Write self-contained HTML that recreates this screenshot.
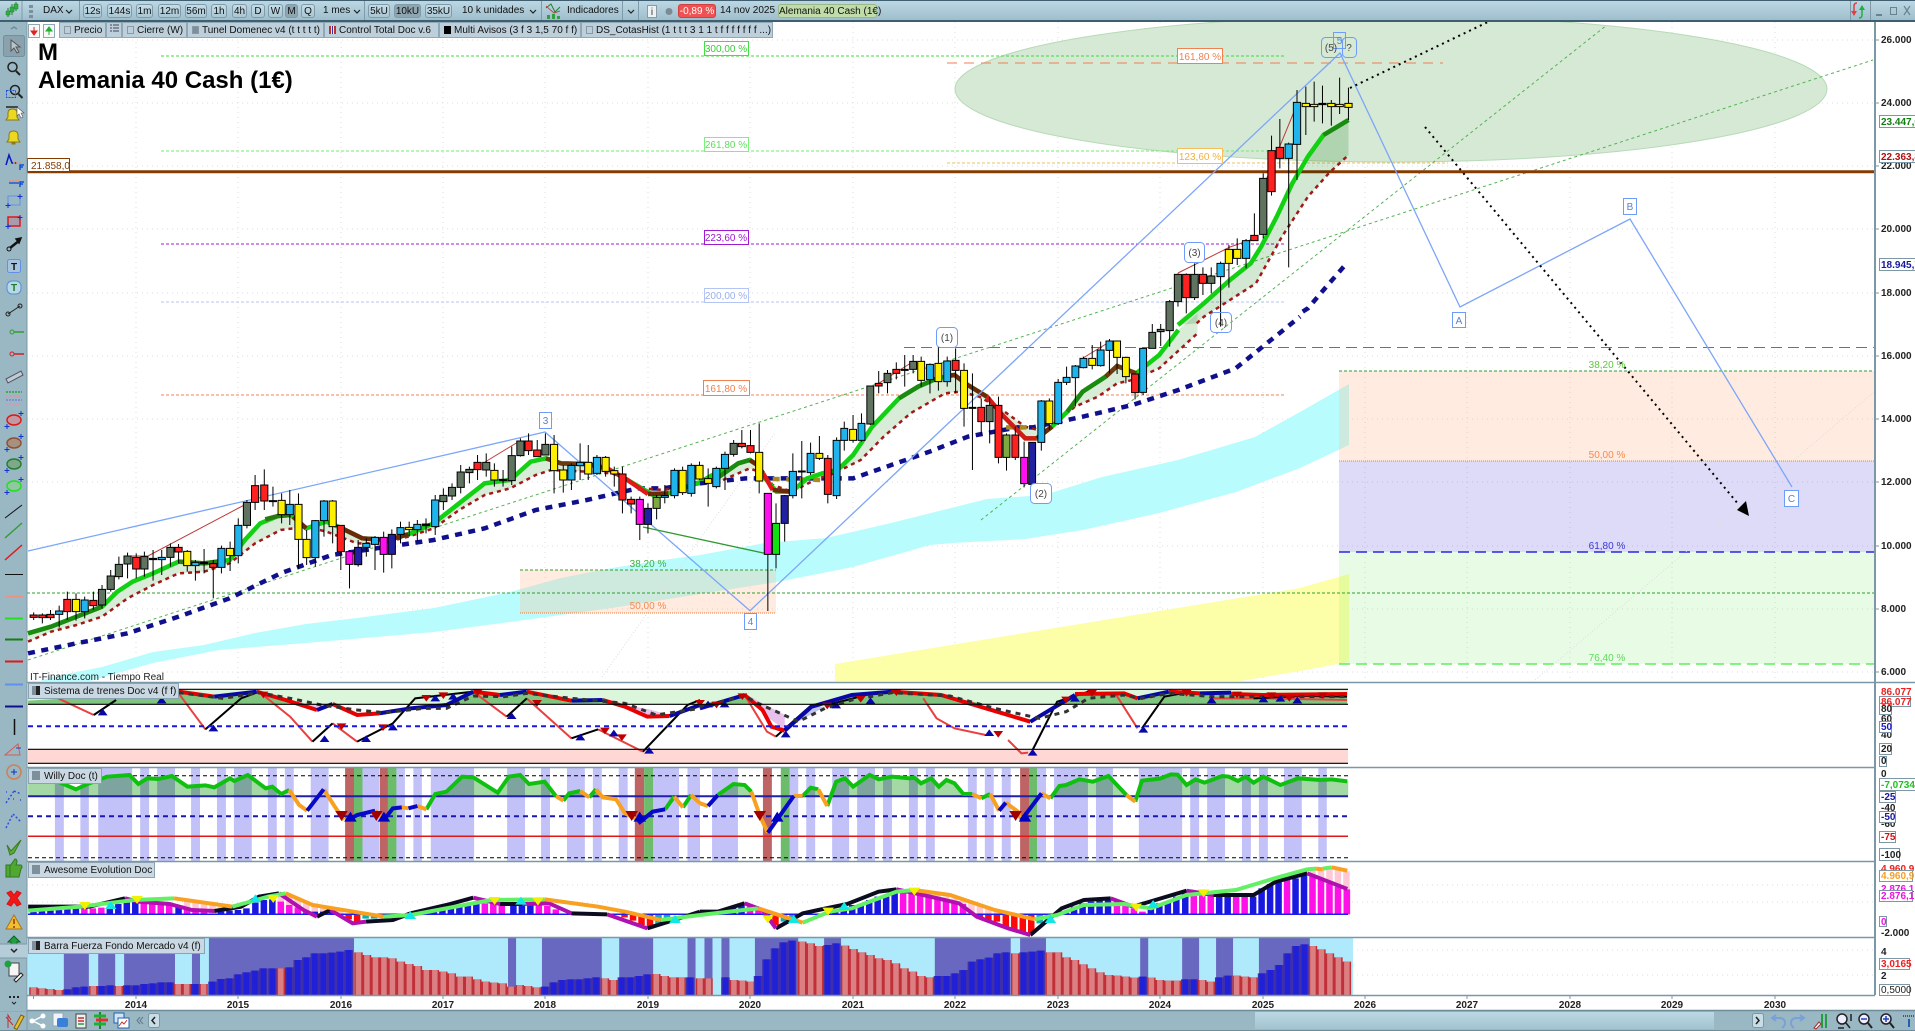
<!DOCTYPE html>
<html><head><meta charset="utf-8"><title>Alemania 40 Cash</title>
<style>
html,body{margin:0;padding:0;background:#fff}
body{width:1915px;height:1031px;position:relative;overflow:hidden;font-family:"Liberation Sans",sans-serif;color:#111}
svg{position:absolute;left:0;top:0}
path,polyline,polygon,line,rect,ellipse{vector-effect:non-scaling-stroke}
.tb{position:absolute;left:0;top:0;width:1915px;height:22px;box-sizing:border-box;background:linear-gradient(#bcd7e4,#9fbecc);border-top:1px solid #3f5f70;border-bottom:2px solid #3f5f70}
.b{position:absolute;top:4px;height:14px;line-height:13px;box-sizing:border-box;border:1px solid #7f9ba9;border-radius:3px;font-size:10px;text-align:center;white-space:nowrap;background:linear-gradient(#c4dde8,#a9c6d3)}
.b.a{background:#8fa5b0}
.t{position:absolute;top:4px;height:14px;line-height:14px;font-size:10px;white-space:nowrap}
.tab{position:absolute;top:22px;height:16px;line-height:15px;box-sizing:border-box;background:#bccfda;border:1px solid #8fa8b5;font-size:10px;white-space:nowrap;padding-left:2px;overflow:hidden}
.sq{display:inline-block;width:7px;height:8px;margin:0 3px 0 2px;vertical-align:-1px;border:1px solid #8a9aa4;box-sizing:border-box}
.pt{position:absolute;left:28px;height:16px;line-height:15px;box-sizing:border-box;background:#c9d8e2;border:1px solid #8aa3b0;font-size:10px;white-space:nowrap;padding-left:3px}
.sq2{display:inline-block;width:8px;height:9px;margin-right:4px;vertical-align:-1px;background:linear-gradient(90deg,#7d8f9a 50%,#222 50%)}
.ax{font-size:10px;font-weight:bold;fill:#222;font-family:"Liberation Sans",sans-serif}
.lb{font-size:10px;font-family:"Liberation Sans",sans-serif}
.yr{font-size:10px;font-weight:bold;fill:#222;text-anchor:middle;font-family:"Liberation Sans",sans-serif}
.w{font-size:10px;text-anchor:middle;font-family:"Liberation Sans",sans-serif;fill:#5a80c8}
</style></head><body>

<svg width="1915" height="1031" viewBox="0 0 1915 1031">
<defs>
<clipPath id="mc"><rect x="27" y="22" width="1848" height="660"/></clipPath>
<clipPath id="p1"><rect x="27" y="684" width="1320" height="83"/></clipPath>
<clipPath id="band5"><rect x="0" y="28" width="1568" height="45"/></clipPath>
</defs>

<!-- MAIN CHART -->
<g clip-path="url(#mc)">
<path d="M136 22V682M238 22V682M341 22V682M443 22V682M545 22V682M648 22V682M750 22V682M853 22V682M955 22V682M1058 22V682M1160 22V682M1263 22V682M1365 22V682M1467 22V682M1570 22V682M1672 22V682M1775 22V682M27 40H1875M27 103H1875M27 166H1875M27 229H1875M27 293H1875M27 356H1875M27 419H1875M27 482H1875M27 546H1875M27 609H1875M27 672H1875" stroke="#dcdcdc" stroke-width="1" stroke-dasharray="1 4" fill="none"/>
<ellipse cx="1391" cy="89" rx="436" ry="73" fill="#d5e9d5" stroke="#b8d9b8"/>
<polygon fill="#b9fcfd" points="51,677 102,667 153,652 204,645 255,633 306,624 357,618 434,608 510,592 561,578 612,568 663,560 700,555 765,543 826,538 891,523 987,499 1044,495 1102,477 1178,460 1255,437 1300,412 1349,384 1349,445 1300,468 1236,492 1159,513 1083,530 1025,539 953,543 930,545 853,567 777,582 700,594 612,608 561,615 510,622 434,632 306,643 219,650 153,663 90,681 40,681"/>
<polygon fill="#fdfea8" points="835,664 1300,588 1349,574 1349,662 1300,671 1240,681 835,681"/>
<rect x="520" y="570" width="256" height="43" fill="rgba(255,190,150,.3)"/>
<rect x="1339" y="371" width="536" height="90" fill="rgba(255,190,150,.3)"/>
<rect x="1339" y="461" width="536" height="91" fill="rgba(100,90,225,.22)"/>
<rect x="1339" y="552" width="536" height="112" fill="rgba(120,240,100,.17)"/>
<!-- fib lines -->
<g fill="none" stroke-width="1">
<path d="M161 56H1286" stroke="#3cdc3c" stroke-dasharray="3 2"/>
<path d="M161 151H1286" stroke="#70ee70" stroke-dasharray="3 2"/>
<path d="M161 244H1286" stroke="#a018d0" stroke-dasharray="3 2"/>
<path d="M161 302H1286" stroke="#b4c4f4" stroke-dasharray="3 2"/>
<path d="M161 395H1286" stroke="#f08050" stroke-dasharray="3 2"/>
<path d="M947 63H1443" stroke="#f08050" stroke-dasharray="10 7"/>
<path d="M947 163H1448" stroke="#f6bf5c" stroke-dasharray="3 2"/>
<path d="M27 593H1875" stroke="#2ea02e" stroke-dasharray="3 2"/>
<path d="M904 347.5H1875" stroke="#2ea02e" stroke-dasharray="11 6"/>
<path d="M1339 371H1875M520 570H776" stroke="#2ea02e" stroke-dasharray="3 2"/>
<path d="M1339 461H1875M520 613H776" stroke="#f07838" stroke-dasharray="1 1"/>
<path d="M1339 552H1875" stroke="#2828e0" stroke-width="1.5" stroke-dasharray="11 6"/>
<path d="M1339 664H1875" stroke="#5cf05c" stroke-width="1.5" stroke-dasharray="11 6"/>
<path d="M28 660L1873 60M981 520L1607 25" stroke="#54b254" stroke-dasharray="3 3"/>
<path d="M1535 680L1874 392M602 677L775 433" stroke="#ddd" stroke-dasharray="1 2"/>
</g>
<path d="M27 171.7H1875" stroke="#843c00" stroke-width="3" fill="none"/>

<!-- Z3 MAs -->
<g transform="translate(0 400) scale(.5102 .33333)" fill="none">
<polygon stroke="none" fill="#d8ecd8" points="55,700 100,680 150,650 200,620 230,575 260,545 300,520 350,485 400,490 450,480 480,420 510,370 545,348 570,345 600,385 640,365 670,385 710,415 760,420 800,403 850,370 900,310 950,250 1000,240 1040,185 1070,175 1100,190 1150,192 1190,205 1230,240 1280,285 1310,280 1370,248 1420,205 1420,240 1370,245 1300,270 1260,265 1200,220 1150,215 1080,210 1050,225 1000,265 950,285 900,330 850,385 800,410 750,430 700,430 640,395 600,380 550,390 500,430 450,490 400,515 350,520 300,555 250,595 200,650 150,675 100,695 55,725"/>
<polyline stroke="#10108c" stroke-width="4.5" stroke-dasharray="7 6.5" points="55,760 150,730 250,700 350,650 450,595 550,520 650,465 760,440 850,420 950,385 1050,330 1150,300 1250,265 1300,265 1372,248"/>
<polyline stroke="#a01818" stroke-width="2.5" stroke-dasharray="4 4" points="55,725 100,695 150,675 200,650 250,595 300,555 350,520 400,515 450,490 500,430 550,390 600,380 640,395 700,430 750,430 800,410 850,385 900,330 950,285 1000,265 1050,225 1080,210 1150,215 1200,220 1260,265 1300,270 1400,245"/>
<polyline stroke="#12d012" stroke-width="4.5" points="55,700 100,680 150,650 200,620 230,575 260,545 300,520 350,485 400,490 450,480 480,420 510,370 545,348 570,345 600,385 640,365 670,385 710,415 760,420 800,403 850,370 900,310 950,250 1000,240 1040,185 1070,175 1100,190 1150,192 1190,205 1230,240 1280,285 1310,280 1370,248 1420,205"/>
<polyline stroke="#1a8a10" stroke-width="4.5" points="55,700 100,680 150,650 200,620"/>
<polyline stroke="#2a7a10" stroke-width="4.5" points="350,485 400,490 440,482"/>
<polyline stroke="#2a7a10" stroke-width="4.5" points="520,358 545,348 570,345"/>
<polyline stroke="#6b2a08" stroke-width="4.5" points="575,350 600,385"/>
<polyline stroke="#6b2a08" stroke-width="4.5" points="670,385 710,415 760,420 800,403"/>
<polyline stroke="#6b3a10" stroke-width="4.5" points="1070,175 1100,190 1150,192 1190,205"/>
<polyline stroke="#e01818" stroke-width="4.5" points="1190,205 1230,240 1270,282"/>
<polyline stroke="#6b2a08" stroke-width="4.5" points="1270,282 1310,280"/>
</g>
<!-- Z8 MAs -->
<g transform="translate(700 300) scale(.38265 .33333)" fill="none">
<polygon stroke="none" fill="#d8ecd8" points="50,530 100,490 130,480 150,495 170,535 200,575 240,575 280,535 320,520 360,510 400,465 450,380 520,295 570,260 620,235 665,225 700,255 750,290 790,345 850,415 880,415 920,380 960,335 1000,275 1060,230 1090,198 1140,220 1200,165 1250,90 1300,40 1300,100 1200,205 1130,240 1090,250 1040,290 980,320 900,395 850,380 790,330 730,290 680,275 640,280 550,340 480,410 420,480 350,520 300,540 240,575 190,555 165,520 130,505 60,540"/>
<polyline stroke="#10108c" stroke-width="4.5" stroke-dasharray="7 6.5" points="0,550 120,535 400,535 600,455 700,410 830,382 870,382 1000,350 1130,315 1250,270 1400,205 1568,50"/>
<polyline stroke="#a01818" stroke-width="2.5" stroke-dasharray="4 4" points="60,540 130,505 165,520 190,555 240,575 300,540 350,520 420,480 480,410 550,340 640,280 680,275 730,290 790,330 850,380 900,395 980,320 1040,290 1090,250 1130,240 1200,205 1300,100"/>
<polyline stroke="#a88a20" stroke-width="4.5" stroke-dasharray="7 6.5" points="190,537 320,540"/>
<polyline stroke="#a88a20" stroke-width="4.5" stroke-dasharray="7 6.5" points="800,382 870,382"/>
<polyline stroke="#12d012" stroke-width="4.5" points="50,530 100,490 130,480 150,495 170,535 200,575 240,575 280,535 320,520 360,510 400,465 450,380 520,295 570,260 620,235 665,225 700,255 750,290 790,345 850,415 880,415 920,380 960,335 1000,275 1060,230 1090,198 1140,220 1200,165 1250,90"/>
<polyline stroke="#1a8a10" stroke-width="4.5" points="50,530 100,490 130,480"/>
<polyline stroke="#1a8a10" stroke-width="4.5" points="520,295 570,260 620,235"/>
<polyline stroke="#6b2a08" stroke-width="4.5" points="130,480 150,495 165,520"/>
<polyline stroke="#e01818" stroke-width="4.5" points="165,520 190,570"/>
<polyline stroke="#6b2a08" stroke-width="4.5" points="190,570 240,575"/>
<polyline stroke="#6b2a08" stroke-width="4.5" points="640,228 665,225 700,255 750,290"/>
<polyline stroke="#d81818" stroke-width="4.5" points="750,290 790,345 850,415 880,415"/>
<polyline stroke="#6b2a08" stroke-width="4.5" points="880,415 920,380"/>
<polyline stroke="#1a8a10" stroke-width="4.5" points="960,335 1000,275 1060,230"/>
<polyline stroke="#6b3a10" stroke-width="4.5" points="1060,230 1090,198 1140,220"/>
</g>
<!-- Z4 MAs -->
<g transform="translate(1100 20) scale(.5198 .33333)" fill="none">
<polygon stroke="none" fill="#d2e8d2" style="mix-blend-mode:multiply" points="150,915 200,850 250,780 290,730 310,680 340,590 370,490 400,410 430,345 478,300 478,405 440,460 400,530 350,650 300,790 260,830 200,890 186,910"/>
<polyline stroke="#10108c" stroke-width="4.5" stroke-dasharray="7 6.5" points="390,875 400,865 430,810 470,738"/>
<polyline stroke="#a01818" stroke-width="2.5" stroke-dasharray="4 4" points="186,910 200,890 260,830 300,790 350,650 400,530 440,460 478,405"/>
<polyline stroke="#12d012" stroke-width="4.5" points="150,915 200,850 250,780 290,730 310,680 340,590 370,490 400,410 430,345 478,300"/>
<polyline stroke="#1a8a10" stroke-width="4.5" points="430,345 478,300"/>
</g>

<!-- trend / waves -->
<g fill="none" stroke-width="1">
<polyline stroke="#7ca6f8" stroke-width="1.3" points="28,551 545,432 750,610.7 1340,53 1460,307 1630,219 1792,487"/>
<path d="M643 527L768 554" stroke="#2f9a2f" stroke-width="1.3"/>
<g stroke="#c03a3a">
<path d="M127 556H148L250 502M485 462L518 442M876 385L914 361M1083 358L1111 341M1178 273L1230 247L1256 238M1266 180L1298 102"/>
</g>
</g>

<!-- CANDLES Z3 -->
<g transform="translate(0 400) scale(.5102 .33333)">
<path stroke="#000" stroke-width="1" fill="none" d="M66 637V660M83 640V670M99 630V660M116 617V683M132 575V660M149 580V662M166 590V655M183 575V630M200 555V625M217 510V575M233 470V538M250 458V535M267 460V535M283 455V530M300 450V542M317 450V525M334 430V500M350 432V490M367 450V515M383 480V542M400 447V520M418 480V595M434 437V520M451 425V513M467 355V490M484 300V385M500 225V330M518 208V330M535 260V320M552 280V370M568 270V375M585 280V505M601 390V495M618 360V500M635 300V410M652 300V430M668 375V510M685 450V565M702 420V500M718 415V470M735 408V510M752 395V518M768 388V505M785 365V430M802 365V410M818 360V425M835 355V400M853 285V405M869 265V330M886 250V300M903 195V280M920 200V250M936 165V240M953 160V230M969 190V260M986 210V260M1003 140V255M1020 115V170M1036 100V165M1053 120V170M1069 100V165M1086 105V280M1104 195V278M1120 190V270M1137 130V240M1153 135V240M1170 165V225M1187 168V230M1204 200V260M1220 200V340M1237 290V340M1254 290V420M1270 310V400M1287 285V358M1303 255V310M1322 205V295M1338 200V285M1355 190V290M1371 185V240M1388 205V320M1404 200V265M1421 155V270M1438 120V170M1454 90V145M1471 90V160M1488 70V280M1505 280V633M1521 310V505M1538 285V425M1554 160V295"/>
<g stroke="#000" stroke-width="1">
<path fill="#5f7360" d="M193 568h14V615h-14zM210 528h14V568h-14zM226 493h14V530h-14zM243 468h14V492h-14zM276 470h14V507h-14zM327 442h14V472h-14zM477 307h14V376h-14zM896 216h14V262h-14zM913 208h14V218h-14zM879 262h14V288h-14zM862 286h14V305h-14zM996 167h14V242h-14zM1013 123h14V167h-14zM1062 133h14V165h-14zM1431 130h14V163h-14zM946 187h14V210h-14z"/>
<path fill="#ff2020" d="M59 645h14V652h-14zM76 645h14V653h-14zM92 643h14V653h-14zM125 598h14V635h-14zM176 601h14V617h-14zM260 472h14V507h-14zM343 442h14V456h-14zM411 491h14V502h-14zM493 257h14V307h-14zM511 255h14V303h-14zM661 376h14V455h-14zM929 187h14V209h-14zM1029 123h14V152h-14zM1046 150h14V170h-14zM1213 222h14V300h-14zM1230 298h14V312h-14zM1447 130h14V140h-14zM1464 137h14V157h-14z"/>
<path fill="#fff000" d="M142 598h14V635h-14zM360 454h14V497h-14zM444 445h14V467h-14zM545 301h14V344h-14zM578 313h14V418h-14zM594 418h14V473h-14zM645 303h14V380h-14zM795 382h14V389h-14zM962 211h14V240h-14zM1079 133h14V212h-14zM1097 210h14V240h-14zM1146 187h14V222h-14zM1180 172h14V214h-14zM1197 212h14V222h-14zM1331 211h14V278h-14zM1364 196h14V237h-14zM1381 236h14V250h-14zM1481 157h14V243h-14z"/>
<path fill="#1fb4ec" d="M109 633h14V643h-14zM159 600h14V635h-14zM310 472h14V479h-14zM376 487h14V497h-14zM427 445h14V502h-14zM460 376h14V467h-14zM561 313h14V344h-14zM611 362h14V473h-14zM628 303h14V362h-14zM711 430h14V442h-14zM728 412h14V433h-14zM778 383h14V403h-14zM811 373h14V389h-14zM846 300h14V380h-14zM1113 196h14V240h-14zM1130 187h14V197h-14zM1163 172h14V220h-14zM1296 287h14V292h-14zM1315 211h14V287h-14zM1348 196h14V280h-14zM1397 205h14V260h-14zM1414 163h14V205h-14zM1547 214h14V287h-14z"/>
<path fill="#ff10f0" d="M678 455h14V493h-14zM745 412h14V463h-14zM1247 298h14V373h-14zM1498 280h14V463h-14z"/>
<path fill="#2020a0" d="M695 442h14V494h-14zM761 403h14V463h-14zM1263 325h14V373h-14zM1531 287h14V370h-14z"/>
<path fill="#10e010" d="M1514 370h14V463h-14z"/>
<path fill="#80a840" d="M1280 292h14V325h-14z"/>
<path fill="#000" d="M293 475h14V479h-14zM393 487h14V491h-14zM528 302h14V305h-14zM828 372h14V377h-14zM979 238h14V242h-14z"/>
</g>
</g>
<!-- CANDLES Z8 -->
<g transform="translate(700 300) scale(.38265 .33333)">
<path stroke="#000" stroke-width="1" fill="none" d="M266 423V595M289 428V525M312 408V480M334 465V610M357 412V597M377 365V452M400 345V428M422 340V425M445 258V375M467 213V280M490 210V280M513 187V238M535 165V260M557 165V220M578 170V260M601 190V280M623 140V272M646 170V260M668 145V280M690 190V380M712 220V510M735 295V405M757 290V430M780 290V490M801 400V512M824 380V480M847 425V562M868 427V568M892 300V452M913 295V390M936 237V375M958 200V255M981 195V320M1002 170V205M1025 135V208M1047 125V200M1070 117V220M1090 123V222M1113 170V250M1137 222V298M1158 145V285M1182 72V145M1204 72V138"/>
<g stroke="#000" stroke-width="1">
<path fill="#5f7360" d="M436 258h18V372h-18zM481 220h18V248h-18zM548 184h18V208h-18zM748 316h18V365h-18zM1173 97h18V145h-18zM1195 88h18V95h-18z"/>
<path fill="#ff2020" d="M325 475h18V583h-18zM458 250h18V258h-18zM504 208h18V220h-18zM659 181h18V211h-18zM726 322h18V365h-18zM771 316h18V472h-18zM815 405h18V472h-18zM1128 222h18V278h-18z"/>
<path fill="#fff000" d="M303 460h18V475h-18zM391 388h18V421h-18zM569 184h18V241h-18zM614 190h18V245h-18zM681 211h18V325h-18zM904 303h18V371h-18zM1016 175h18V196h-18zM1081 123h18V172h-18zM1104 172h18V230h-18z"/>
<path fill="#1fb4ec" d="M280 460h18V518h-18zM348 421h18V587h-18zM368 385h18V421h-18zM413 370h18V421h-18zM592 193h18V239h-18zM637 183h18V245h-18zM883 303h18V427h-18zM927 247h18V371h-18zM949 232h18V247h-18zM972 198h18V233h-18zM993 175h18V203h-18zM1038 150h18V197h-18zM1061 123h18V151h-18zM1149 145h18V277h-18z"/>
<path fill="#ff10f0" d="M838 472h18V551h-18z"/>
<path fill="#2020a0" d="M859 427h18V553h-18z"/>
<path fill="#80a840" d="M792 405h18V472h-18z"/>
<path fill="#000" d="M257 513h18V516h-18zM526 208h18V211h-18zM703 322h18V325h-18z"/>
</g>
</g>
<!-- CANDLES Z4 -->
<g transform="translate(1100 20) scale(.5198 .33333)">
<path stroke="#000" stroke-width="1" fill="none" d="M134 840V980M150 760V860M166 760V880M182 730V840M198 742V825M214 742V820M232 725V920M248 675V803M264 655V735M281 657V745M297 580V660M314 460V655M330 347V527M346 297V445M363 368V742M379 210V480M396 200V345M412 185V305M428 197V310M445 240V317M461 173V282M478 203V300"/>
<g stroke="#000" stroke-width="1">
<path fill="#5f7360" d="M127 845h14V932h-14zM143 763h14V845h-14zM175 763h14V833h-14zM207 768h14V790h-14zM307 475h14V643h-14z"/>
<path fill="#ff2020" d="M159 763h14V833h-14zM191 763h14V790h-14zM290 646h14V662h-14zM323 392h14V515h-14zM339 382h14V415h-14z"/>
<path fill="#fff000" d="M241 688h14V730h-14zM257 688h14V715h-14zM389 250h14V260h-14zM405 253h14V260h-14zM438 250h14V260h-14zM454 253h14V260h-14zM471 250h14V262h-14z"/>
<path fill="#1fb4ec" d="M225 730h14V770h-14zM274 662h14V715h-14zM356 372h14V415h-14zM372 247h14V373h-14z"/>
<path fill="#000" d="M421 250h14V254h-14z"/>
</g>
</g>
<!-- dotted arrows -->
<g fill="none" stroke="#000" stroke-width="2" stroke-dasharray="2 4">
<path d="M1350 88L1490 21M1425 127L1739 505"/>
</g>
<path d="M1749 516L1737 510L1746 501z" fill="#000"/>
</g>

<!-- fib labels -->
<g class="lb" text-anchor="middle">
<g fill="#fff" stroke-width="1">
<rect x="704.5" y="41.5" width="44" height="14" stroke="#48dc48"/>
<rect x="704.5" y="137.5" width="44" height="14" stroke="#80ee80"/>
<rect x="704.5" y="230.5" width="44" height="14" stroke="#a018d0"/>
<rect x="704.5" y="288.5" width="44" height="14" stroke="#b4c4f4"/>
<rect x="703.5" y="380.5" width="46" height="15" stroke="#f08050"/>
<rect x="1177.5" y="48.5" width="45" height="15" stroke="#f08050"/>
<rect x="1177.5" y="148.5" width="45" height="15" stroke="#f6bf5c"/>
</g>
<text x="726" y="52" fill="#3cc83c">300,00 %</text>
<text x="726" y="148" fill="#60dc60">261,80 %</text>
<text x="726" y="241" fill="#a018d0">223,60 %</text>
<text x="726" y="299" fill="#9ab0ec">200,00 %</text>
<text x="726" y="392" fill="#f08050">161,80 %</text>
<text x="1200" y="60" fill="#f08050">161,80 %</text>
<text x="1200" y="160" fill="#f0b040">123,60 %</text>
<text x="648" y="567" fill="#3cb03c">38,20 %</text>
<text x="648" y="609" fill="#f58a50">50,00 %</text>
<text x="1607" y="368" fill="#5cc83c">38,20 %</text>
<text x="1607" y="458" fill="#f58a50">50,00 %</text>
<text x="1607" y="549" fill="#3838d8">61,80 %</text>
<text x="1607" y="661" fill="#5cdc5c">76,40 %</text>
</g>
<!-- wave labels -->
<g fill="#fff" stroke="#6e9cf8" stroke-width="1">
<rect x="539.5" y="412.5" width="12" height="16"/>
<rect x="744.5" y="613.5" width="12" height="16"/>
<rect x="936.5" y="327.5" width="21" height="20" rx="4"/>
<rect x="1030.5" y="483.5" width="21" height="20" rx="4"/>
<rect x="1210.5" y="312.5" width="21" height="20" rx="4" fill="none"/>
<rect x="1184.5" y="242.5" width="20" height="20" rx="4"/>
<rect x="1321.5" y="37.5" width="21" height="20" rx="4" fill="none"/>
<rect x="1342.5" y="37.5" width="14" height="20" rx="4" fill="none"/>
<rect x="1333.5" y="32.5" width="12" height="16" fill="none"/>
<rect x="1452.5" y="312.5" width="13" height="15"/>
<rect x="1623.5" y="198.5" width="13" height="16"/>
<rect x="1784.5" y="490.5" width="14" height="16"/>
</g>
<text class="w" x="545.5" y="424">3</text><text class="w" x="750.5" y="625">4</text>
<text class="w" x="1339.5" y="44">5</text><text class="w" x="1459" y="324">A</text><text class="w" x="1630" y="210">B</text><text class="w" x="1791.5" y="502">C</text>
<g font-size="10" text-anchor="middle" font-family="Liberation Sans" fill="#444">
<text x="947" y="341">(1)</text><text x="1041" y="497">(2)</text><text x="1194.5" y="256">(3)</text><text x="1221" y="326">(4)</text><text x="1331" y="51">(5)</text><text x="1349" y="51">?</text>
</g>

<text x="38" y="60" font-size="24" font-weight="bold" font-family="Liberation Sans" fill="#000">M</text>
<text x="38" y="88" font-size="24" font-weight="bold" font-family="Liberation Sans" fill="#000">Alemania 40 Cash (1€)</text>
<text x="30" y="680" font-size="10" font-family="Liberation Sans" fill="#222">IT-Finance.com - Tiempo Real</text>
<rect x="27.5" y="158.5" width="42" height="13" fill="#fff" stroke="#843c00"/>
<text x="31" y="169" font-size="10" font-family="Liberation Sans" fill="#843c00">21.858,0</text>

<!-- PANEL 1 -->
<g fill="none">
<rect x="28" y="689.3" width="1320" height="15" fill="#dcf6dc"/>
<rect x="28" y="749.3" width="1320" height="14" fill="#ffd8d6"/>
<g clip-path="url(#p1)">
<g transform="translate(0 680) scale(.44643 .33333)">
<g clip-path="url(#band5)">
<polygon fill="#7fc57f" points="63,73 63,62 150,55 400,35 480,50 580,35 640,60 700,85 745,70 800,105 850,100 920,85 1000,75 1060,35 1120,45 1180,35 1280,60 1350,60 1400,80 1450,110 1500,105 1568,73"/>
</g>
<polygon fill="#e8c0ec" points="1350,62 1450,110 1500,105 1460,90"/>
<polygon fill="#e8c0ec" points="640,62 700,85 745,72 690,70"/>
<g stroke-width="2" stroke="#e84040"><path d="M130 55L210 105M400 40L460 148M580 35L650 110L700 185M745 130L800 185M1060 35L1135 110M1180 55L1280 175M1340 148L1440 215"/></g>
<g stroke-width="2" stroke="#000"><path d="M210 105L260 60M460 148L540 55L580 35M700 185L745 130M800 185L880 130L930 55L1060 35M1135 110L1180 55M1280 175L1340 148M1440 215L1540 75L1568 60"/></g>
<g stroke-width="4" stroke="#e80000"><path d="M400 35L480 50M575 35L640 60L710 90M745 72L800 105L850 100M1060 35L1120 45M1180 35L1280 62M1350 60L1400 80L1450 110L1500 108"/></g>
<g stroke-width="4" stroke="#0808a8"><path d="M480 50L575 35M710 90L745 72M850 100L920 85L1000 75L1060 35M1120 45L1180 35M1280 62L1350 60M1500 108L1568 75"/></g>
<polyline stroke="#333" stroke-width="3" stroke-dasharray="5 5" points="400,38 500,55 580,38 650,55 720,75 800,90 860,98 950,85 1000,85 1060,48 1130,50 1180,40 1280,55 1400,70 1470,105 1568,85"/>
<path fill="#0808a8" d="M230 86l11 20h-22zM362 50l11 20h-22zM478 134l11 20h-22zM727 166l11 20h-22zM820 166l11 20h-22zM880 131l11 20h-22zM975 44l11 20h-22zM1015 39l11 20h-22zM1146 97l11 20h-22zM1300 161l11 20h-22zM1375 149l11 20h-22zM1454 201l11 20h-22z"/>
<path fill="#c00000" d="M590 55l-11-20h22zM765 150l-11-20h22zM858 153l-11-20h22zM955 65l-11-20h22zM993 57l-11-20h22zM1070 48l-11-20h22zM1203 80l-11-20h22zM1355 163l-11-20h22zM1393 183l-11-20h22z"/>
</g>
<g transform="translate(700 680) scale(.44643 .33333)">
<g clip-path="url(#band5)">
<polygon fill="#7fc57f" points="0,73 0,85 100,45 140,90 160,73 250,73 250,80 340,45 430,35 540,45 640,73 800,73 840,45 950,40 980,55 1050,35 1150,40 1350,45 1452,40 1452,73"/>
</g>
<polygon fill="#e8c0ec" points="110,48 190,105 190,150 140,100"/>
<polygon fill="#c4c4f0" points="190,150 250,80 280,80 220,125"/>
<polygon fill="#e8c0ec" points="540,45 660,85 740,122 640,85"/>
<g stroke-width="2" stroke="#e84040"><path d="M100 45L150 155L170 170M500 55L530 115L570 145L640 165M690 180L720 220L735 218M930 40L980 145M1140 55L1260 55L1450 60"/></g>
<g stroke-width="2" stroke="#000"><path d="M170 170L250 75L300 70L400 35M745 210L800 65L870 35M990 145L1040 50L1100 35M1240 55L1350 48L1450 50"/></g>
<g stroke-width="4" stroke="#e80000"><path d="M100 45L140 90L160 140L190 152M430 35L540 45L640 85L740 125M840 42L950 40L980 55M1050 35L1120 40M1190 42L1260 45L1452 42"/></g>
<g stroke-width="4" stroke="#0808a8"><path d="M0 85L100 45M190 152L250 80L340 45L430 35M740 125L840 45M980 55L1050 35M1120 40L1190 38"/></g>
<polyline stroke="#333" stroke-width="3" stroke-dasharray="5 5" points="0,80 100,48 130,70 180,100 220,125 280,85 340,60 430,38 560,48 660,85 760,115 820,95 870,55 950,45 990,55 1050,40 1150,50 1250,50 1450,50"/>
<path fill="#0808a8" d="M18 62l11 20h-22zM55 62l11 20h-22zM192 152l11 20h-22zM305 65l11 20h-22zM382 52l11 20h-22zM648 148l11 20h-22zM745 207l11 20h-22zM840 45l11 20h-22zM993 138l11 20h-22zM1146 50l11 20h-22zM1262 47l11 20h-22zM1300 45l11 20h-22zM1338 50l11 20h-22z"/>
<path fill="#c00000" d="M0 80l-11-20h22zM37 85l-11-20h22zM95 60l-11-20h22zM285 88l-11-20h22zM360 68l-11-20h22zM440 48l-11-20h22zM668 173l-11-20h22zM820 70l-11-20h22zM878 50l-11-20h22zM1090 50l-11-20h22zM1203 55l-11-20h22zM1280 57l-11-20h22zM1320 65l-11-20h22zM1395 57l-11-20h22z"/>
</g>
</g>
<path d="M28 689.3H1348M28 704.3H1348M28 749.3H1348M28 763.3H1348" stroke="#000" stroke-width="1.2"/>
<path d="M28 726.3H1348" stroke="#1818e0" stroke-width="2" stroke-dasharray="5 4"/>
</g>

<!-- PANEL 2 -->
<g transform="translate(0 680) scale(.44643 .33333)">
<path fill="#c2c2f8" d="M123 263h20V544h-20zM180 263h19V544h-19zM220 263h76V544h-76zM314 263h20V544h-20zM352 263h40V544h-40zM428 263h20V544h-20zM486 263h20V544h-20zM524 263h40V544h-40zM600 263h20V544h-20zM638 263h20V544h-20zM696 263h40V544h-40zM812 263h38V544h-38zM888 263h19V544h-19zM926 263h19V544h-19zM965 263h97V544h-97zM1136 263h40V544h-40zM1212 263h20V544h-20zM1270 263h40V544h-40zM1328 263h20V544h-20zM1386 263h20V544h-20zM1463 263h58V544h-58zM1540 263h28V544h-28z"/>
<path fill="#bf6464" d="M773 263h20V544h-20zM851 263h18V544h-18zM1422 263h21V544h-21z"/>
<path fill="#6cbc6c" d="M793 263h19V544h-19zM869 263h19V544h-19zM1443 263h20V544h-20z"/>
</g>
<g transform="translate(700 680) scale(.44643 .33333)">
<path fill="#c2c2f8" d="M27 263h58V544h-58zM201 263h19V544h-19zM238 263h20V544h-20zM296 263h38V544h-38zM352 263h40V544h-40zM410 263h20V544h-20zM468 263h20V544h-20zM506 263h20V544h-20zM600 263h20V544h-20zM638 263h20V544h-20zM676 263h20V544h-20zM755 263h20V544h-20zM793 263h76V544h-76zM887 263h38V544h-38zM983 263h97V544h-97zM1098 263h20V544h-20zM1136 263h40V544h-40zM1214 263h20V544h-20zM1252 263h20V544h-20zM1308 263h40V544h-40zM1385 263h19V544h-19z"/>
<path fill="#bf6464" d="M141 263h20V544h-20zM717 263h20V544h-20z"/>
<path fill="#6cbc6c" d="M181 263h20V544h-20zM737 263h18V544h-18z"/>
</g>
<g style="mix-blend-mode:multiply">
<g transform="translate(0 680) scale(.44643 .33333)"><polygon fill="#a4d8a4" points="63,349 63,305 130,305 170,328 200,310 240,290 290,285 310,312 330,295 355,297 385,288 420,320 460,316 480,322 515,295 525,303 555,285 595,325 610,320 630,342 648,349 975,349 975,342 1000,335 1035,290 1060,292 1115,338 1140,290 1165,285 1185,312 1220,305 1240,349 1275,349 1275,340 1300,333 1315,349 1325,349 1335,328 1345,349 1510,349 1530,349 1548,345 1550,349"/></g>
<g transform="translate(700 680) scale(.44643 .33333)"><polygon fill="#a4d8a4" points="30,349 40,345 75,312 100,315 115,335 120,349 230,349 248,323 265,328 272,349 295,349 305,305 325,295 343,320 380,285 400,298 430,290 470,295 480,293 495,310 518,295 535,320 552,300 570,310 590,342 610,342 630,349 650,342 655,349 790,349 805,318 820,315 850,298 880,305 915,288 955,345 960,349 980,349 990,302 1030,296 1055,283 1070,284 1090,315 1110,298 1130,308 1170,288 1185,290 1205,303 1222,290 1240,308 1262,290 1300,315 1340,295 1390,300 1415,298 1452,304 1452,349"/></g>
</g>
<g fill="none">
<path d="M28 775.7H1348" stroke="#000" stroke-width="1" stroke-dasharray="4 3"/>
<path d="M28 796.3H1348" stroke="#2020a8" stroke-width="2"/>
<path d="M28 816.3H1348" stroke="#1818b0" stroke-width="2" stroke-dasharray="5 4"/>
<path d="M28 836.3H1348" stroke="#e01818" stroke-width="1.5"/>
<path d="M28 857.7H1348" stroke="#000" stroke-width="1" stroke-dasharray="4 3"/>
<g transform="translate(0 680) scale(.44643 .33333)" stroke-width="4">
<path stroke="#10c010" d="M130 305L170 328L200 310L240 290L290 285L310 312L330 295L355 297L385 288L420 320L460 316L480 322L515 295L525 303L555 285L595 325L610 320L630 342L648 330M955 388L975 342L1000 335L1035 290L1060 292L1115 338L1140 290L1165 285L1185 312L1220 305L1245 348M1262 362L1275 340L1300 333M1320 352L1335 328M1490 388L1510 350M1530 382L1548 345"/>
<path stroke="#f8a020" d="M648 330L670 375L688 392M725 328L750 380L770 420M840 392L860 420M900 382L915 385M935 378L955 388M1245 348L1262 362M1300 333L1320 352M1335 328L1350 352L1380 358L1400 400L1430 420M1510 350L1530 382M1548 345L1568 370"/>
<path stroke="#0808c8" d="M688 392L725 328M780 420L800 405L840 392M860 420L880 385L900 382M915 385L935 378M1430 430L1462 395L1490 388"/>
<path fill="#a00000" stroke="none" d="M765 423l-14-30h28zM843 423l-14-30h28zM1415 423l-14-30h28z"/>
<path fill="#0000c0" stroke="none" d="M785 395l14 30h-28zM860 395l14 30h-28zM1433 395l14 30h-28z"/>
</g>
<g transform="translate(700 680) scale(.44643 .33333)" stroke-width="4">
<path stroke="#10c010" d="M40 345L75 312L100 315L115 335M230 348L248 323L265 328M285 378L305 305L325 295L343 320L380 285L400 298L430 290L470 295L480 293L495 310L518 295L535 320L552 300L570 310L590 342L610 342M630 355L650 342M785 355L805 318L820 315L850 298L880 305L915 288L955 345M975 365L990 302L1030 296L1055 283L1070 284L1090 315L1110 298L1130 308L1170 288L1185 290L1205 303L1222 290L1240 308L1262 290L1300 315L1340 295L1390 300L1415 298L1450 304"/>
<path stroke="#f8a020" d="M0 370L18 378M115 335L135 410L152 458M210 348L230 348M265 328L285 378M610 342L630 355M650 342L670 392M685 368L712 395L720 420M765 340L785 355M955 345L975 365"/>
<path stroke="#0808c8" d="M18 378L40 345M152 458L210 348M670 392L685 368M720 420L765 340"/>
<path fill="#a00000" stroke="none" d="M134 423l-14-30h28zM707 423l-14-30h28z"/>
<path fill="#0000c0" stroke="none" d="M173 395l14 30h-28zM728 395l14 30h-28z"/>
</g>
</g>

<!-- PANEL 3 -->
<g fill="none">
<path d="M27 885H1875M27 902H1875M27 950H1875M27 975H1875" stroke="#ddd" stroke-dasharray="1 4"/>
<g transform="translate(0 680) scale(.44643 .33333)" stroke-width="6.5">
<path stroke="#ffc8d4" d="M419 703V660M438 703V662M457 703V665M476 703V668M495 703V670M629 703V640M648 703V645M667 703V655M686 703V665M705 703V670M724 703V678M743 703V682M762 703V688M1400 703V695M1419 703V700"/>
<path stroke="#1818e0" d="M75 703V690M94 703V690M113 703V690M132 703V690M151 703V688M170 703V686M246 703V680M265 703V672M284 703V668M303 703V666M400 703V680M495 703V695M514 703V692M533 703V690M552 703V685M572 703V668M591 703V660M610 703V658M705 703V695M724 703V695M743 703V695M953 703V696M972 703V692M991 703V688M1010 703V682M1029 703V678M1048 703V672M1067 703V668M1150 703V672M1169 703V672M1188 703V672M1284 703V696M1303 703V696"/>
<path stroke="#ff10e8" d="M189 703V685M208 703V685M227 703V683M322 703V665M341 703V665M360 703V667M379 703V670M419 703V688M438 703V690M457 703V692M629 703V665M648 703V675M667 703V682M686 703V695M1086 703V670M1105 703V670M1124 703V670M1207 703V672M1226 703V678M1245 703V688M1341 703V701"/>
<path stroke="#ff0808" d="M781 703V718M800 703V725M1399 703V712M1418 703V722M1437 703V735M1456 703V742"/>
<path stroke="#10b0b0" d="M819 703V716M838 703V716M1475 703V735M1494 703V722"/>
</g>
<g transform="translate(700 680) scale(.44643 .33333)" stroke-width="6.5">
<path stroke="#ffc8d4" d="M455 703V632M474 703V635M493 703V638M512 703V640M532 703V645M551 703V650M570 703V655M589 703V660M608 703V668M627 703V675M646 703V682M665 703V690M1372 703V570M1391 703V570M1410 703V568M1429 703V570M1448 703V574"/>
<path stroke="#1818e0" d="M55 703V690M74 703V680M93 703V675M303 703V695M322 703V680M341 703V675M360 703V672M379 703V660M398 703V650M417 703V645M436 703V635M819 703V695M838 703V680M857 703V670M876 703V665M895 703V662M914 703V660M1010 703V680M1029 703V670M1048 703V665M1067 703V650M1087 703V640M1163 703V650M1182 703V650M1239 703V650M1258 703V625M1277 703V612M1296 703V600M1334 703V595M1353 703V585"/>
<path stroke="#ff10e8" d="M112 703V680M131 703V690M455 703V635M474 703V640M493 703V645M512 703V650M532 703V655M551 703V660M570 703V665M589 703V672M934 703V665M953 703V675M972 703V685M991 703V695M1106 703V640M1125 703V642M1144 703V645M1201 703V650M1220 703V650M1315 703V600M1372 703V590M1391 703V600M1410 703V610M1429 703V620M1449 703V628"/>
<path stroke="#ff0808" d="M150 703V710M169 703V735M627 703V715M646 703V720M665 703V725M685 703V745M704 703V750M723 703V755M742 703V760"/>
<path stroke="#10b0b0" d="M188 703V725M207 703V712M761 703V730M781 703V710"/>
</g>
<path d="M28 914.3H1348" stroke="#1c1cf0" stroke-width="1.5"/>
<g transform="translate(0 680) scale(.44643 .33333)" stroke-width="4">
<path stroke="#0c0c20" d="M63 680L200 680L280 655M480 693L540 680L580 650L625 640M710 710L740 690M820 725L880 720L920 700L1000 675L1060 653M1120 672L1170 672M1280 700L1360 703M1450 745L1510 720L1568 695"/>
<path stroke="#b010b0" d="M280 655L310 665L380 672L430 690L480 693M625 640L680 690L710 710M740 690L790 730L820 725M1060 653L1120 672M1170 672L1230 670L1280 700M1360 703L1450 745"/>
<path stroke="#64f064" d="M63 692L180 680L300 660L390 655M640 640L600 650L520 680M860 710L920 705L1100 660L1220 658M1340 680M1480 720L1568 705"/>
<path stroke="#f8a020" d="M390 655L520 680M640 640L700 675L860 710M1220 658L1340 680L1400 695L1480 720"/>
<path fill="#f0f000" stroke="none" d="M190 690l-13-24h26zM307 672l-13-24h26zM612 669l-13-24h26zM1108 675l-13-24h26zM1205 677l-13-24h26z"/>
<path fill="#10e8e8" stroke="none" d="M248 663l13 24h-26zM572 643l13 24h-26zM919 693l13 24h-26zM1167 650l13 24h-26zM1512 705l13 24h-26z"/>
</g>
<g transform="translate(700 680) scale(.44643 .33333)" stroke-width="4">
<path stroke="#0c0c20" d="M0 695L40 695L100 670M170 745L230 700L265 690L330 672L400 635L440 628M740 765L810 685L860 660L920 655M970 680L1020 660L1090 632M1150 645L1240 645L1290 605L1360 580"/>
<path stroke="#b010b0" d="M100 670L140 690L170 745M440 628L500 645L580 670L620 710L690 745L740 765M920 655L970 680M1090 632L1150 645M1360 580L1450 627"/>
<path stroke="#64f064" d="M0 705L130 685M230 728L290 695L340 685L440 635L480 630M750 718L800 705L860 675L950 672L1010 685L1090 645L1200 630L1300 590L1360 568L1380 566M1395 566L1415 562"/>
<path stroke="#f8a020" d="M130 685L230 728M480 630L560 645L660 690L750 718M1380 566L1395 568M1415 562L1450 572"/>
<path fill="#f0f000" stroke="none" d="M152 730l-13-24h26zM287 707l-13-24h26zM480 647l-13-24h26zM977 695l-13-24h26zM1128 652l-13-24h26z"/>
<path fill="#10e8e8" stroke="none" d="M210 705l13 24h-26zM323 666l13 24h-26zM785 705l13 24h-26zM1015 660l13 24h-26z"/>
</g>
</g>

<!-- PANEL 4 -->
<rect x="28" y="938" width="1325" height="57" fill="#aeeafc"/>
<g transform="translate(0 680) scale(.44643 .33333)"><path fill="#6868c0" d="M143 774h56V945h-56zM220 774h38V945h-38zM278 774h114V945h-114zM430 774h18V945h-18zM468 774h325V945h-325zM1138 774h18V945h-18zM1214 774h134V945h-134zM1387 774h76V945h-76zM1540 774h18V945h-18z"/></g>
<g transform="translate(700 680) scale(.44643 .33333)"><path fill="#6868c0" d="M10 774h18V945h-18zM48 774h18V945h-18zM123 774h97V945h-97zM278 774h38V945h-38zM526 774h170V945h-170zM717 774h58V945h-58zM986 774h18V945h-18zM1080 774h38V945h-38zM1156 774h38V945h-38zM1252 774h114V945h-114z"/></g>
<defs>
<path id="r5" d="M75 945V922M94 945V925M113 945V927M132 945V930M209 945V918M266 945V918M399 945V912M418 945V912M437 945V912M456 945V912M629 945V865M803 945V817M822 945V825M841 945V832M860 945V832M879 945V835M898 945V845M917 945V852M936 945V858M955 945V870M974 945V870M993 945V875M1012 945V880M1031 945V890M1050 945V890M1069 945V898M1088 945V905M1107 945V908M1126 945V910M1145 945V920M1164 945V915M1183 945V918M1202 945V922M1355 945V895M1374 945V900M1470 945V882M1489 945V888M1508 945V892M1527 945V892"/>
<path id="b5" d="M151 945V928M170 945V922M189 945V920M228 945V918M247 945V916M285 945V916M304 945V916M323 945V912M342 945V910M361 945V907M380 945V907M437 945V912M476 945V905M495 945V897M514 945V895M533 945V883M552 945V877M571 945V872M590 945V865M610 945V865M648 945V862M667 945V840M686 945V832M705 945V820M724 945V820M743 945V818M762 945V815M781 945V810M1221 945V920M1240 945V907M1259 945V900M1278 945V898M1297 945V898M1316 945V895M1335 945V892M1393 945V892M1412 945V892M1431 945V888M1450 945V883M1546 945V892"/>
<path id="r6" d="M0 945V895M19 945V895M76 945V900M95 945V902M114 945V905M229 945V785M248 945V790M267 945V798M325 945V797M344 945V807M363 945V817M382 945V825M401 945V835M420 945V840M439 945V850M458 945V865M477 945V875M496 945V888M515 945V892M706 945V820M783 945V817M802 945V817M821 945V832M840 945V840M859 945V853M878 945V865M897 945V877M916 945V885M935 945V887M954 945V890M973 945V893M1011 945V893M1030 945V900M1049 945V902M1068 945V902M1125 945V900M1144 945V905M1202 945V887M1221 945V890M1240 945V892M1373 945V798M1392 945V808M1411 945V820M1430 945V832M1449 945V845"/>
<path id="b6" d="M57 945V892M130 945V888M149 945V838M168 945V805M187 945V787M206 945V782M286 945V795M305 945V790M533 945V888M552 945V888M571 945V880M590 945V870M609 945V845M628 945V838M647 945V833M666 945V820M685 945V817M725 945V817M744 945V815M763 945V812M992 945V890M1087 945V898M1106 945V898M1163 945V892M1182 945V887M1259 945V880M1278 945V870M1297 945V855M1316 945V820M1335 945V798M1354 945V793"/>
</defs>
<g fill="none">
<g transform="translate(0 680) scale(.44643 .33333)">
<use href="#r5" stroke="#c03038" stroke-width="8.5"/><use href="#r5" stroke="#dc7f82" stroke-width="5.5"/>
<use href="#b5" stroke="#4030a8" stroke-width="8.5"/><use href="#b5" stroke="#2020d8" stroke-width="5.5"/>
</g>
<g transform="translate(700 680) scale(.44643 .33333)">
<use href="#r6" stroke="#c03038" stroke-width="8.5"/><use href="#r6" stroke="#dc7f82" stroke-width="5.5"/>
<use href="#b6" stroke="#4030a8" stroke-width="8.5"/><use href="#b6" stroke="#2020d8" stroke-width="5.5"/>
</g>
</g>

<!-- separators -->
<g stroke="#7c98a6" stroke-width="1.5" fill="none">
<path d="M27 682.5H1915M27 767.5H1875M27 861.5H1875M27 937.5H1875M27 995.5H1875"/>
<path d="M1875 22V995" stroke-width="2"/>
<path d="M1875 40h4M1875 103h4M1875 166h4M1875 229h4M1875 293h4M1875 356h4M1875 419h4M1875 482h4M1875 546h4M1875 609h4M1875 672h4M33.500 995v4M136 995v4M238 995v4M341 995v4M443 995v4M545 995v4M648 995v4M750 995v4M853 995v4M955 995v4M1058 995v4M1160 995v4M1263 995v4M1365 995v4M1467 995v4M1570 995v4M1672 995v4M1775 995v4" stroke-width="1"/>
</g>

<!-- axis labels -->
<g class="ax">
<text x="1881" y="43">26.000</text><text x="1881" y="106">24.000</text><text x="1881" y="169">22.000</text><text x="1881" y="232">20.000</text><text x="1881" y="296">18.000</text><text x="1881" y="359">16.000</text><text x="1881" y="422">14.000</text><text x="1881" y="485">12.000</text><text x="1881" y="549">10.000</text><text x="1881" y="612">8.000</text><text x="1881" y="675">6.000</text>
<text x="1881" y="936">-2.000</text><text x="1881" y="955">4</text><text x="1881" y="979">2</text>
<text x="1881" y="722">60</text><text x="1881" y="738">40</text><text x="1881" y="777">0</text><text x="1881" y="811">-40</text><text x="1881" y="827">-60</text><text x="1881" y="872" fill="#f02020">4.960,9</text><text x="1881" y="892" fill="#f010e8">2.876,1</text><text x="1881" y="695" fill="#f02020">86.077</text>
</g>
<g fill="#fff" stroke="#7c98a6" stroke-width="1">
<rect x="1879.500" y="115.500" width="40" height="12"/><rect x="1879.500" y="150.500" width="40" height="12"/><rect x="1879.500" y="258.500" width="40" height="12"/>
<rect x="1879.500" y="696.500" width="31" height="10"/><rect x="1879.500" y="703.500" width="12" height="11"/>
<rect x="1879.500" y="721.500" width="12" height="11"/><rect x="1879.500" y="743.500" width="12" height="11"/><rect x="1879.500" y="756.500" width="7" height="10"/>
<rect x="1879.500" y="778.500" width="36" height="12"/><rect x="1879.500" y="791.500" width="16" height="11"/><rect x="1879.500" y="811.500" width="16" height="11"/><rect x="1879.500" y="831.500" width="16" height="11"/><rect x="1879.500" y="848.500" width="20" height="12"/>
<rect x="1879.500" y="870.500" width="33" height="11"/><rect x="1879.500" y="890.500" width="33" height="11"/><rect x="1879.500" y="916.500" width="7" height="10"/>
<rect x="1879.500" y="958.500" width="30" height="11"/><rect x="1879.500" y="984.500" width="30" height="11"/>
</g>
<g font-size="10" font-weight="bold" font-family="Liberation Sans">
<text x="1881" y="125" fill="#108010">23.447,0</text><text x="1881" y="160" fill="#b01010">22.363,8</text><text x="1881" y="268" fill="#1818a0">18.945,7</text>
<text x="1881" y="705" fill="#f02020">86.077</text><text x="1881" y="712" fill="#222">80</text><text x="1881" y="730" fill="#1818c0">50</text><text x="1881" y="752" fill="#222">20</text><text x="1881" y="764" fill="#222">0</text>
<text x="1881" y="788" fill="#20c020">-7,0734</text><text x="1881" y="800" fill="#1818a0">-25</text><text x="1881" y="820" fill="#1818a0">-50</text><text x="1881" y="840" fill="#d01010">-75</text><text x="1881" y="858" fill="#222">-100</text>
<text x="1881" y="879" fill="#f8a020">4.960,9</text><text x="1881" y="899" fill="#f010e8">2.876,1</text><text x="1881" y="925" fill="#f010e8">0</text>
<text x="1881" y="967" fill="#f02020">3,0165</text><text x="1881" y="993" fill="#222" font-weight="normal">0,5000</text>
</g>
<g class="yr">
<text x="136" y="1008">2014</text><text x="238" y="1008">2015</text><text x="341" y="1008">2016</text><text x="443" y="1008">2017</text><text x="545" y="1008">2018</text><text x="648" y="1008">2019</text><text x="750" y="1008">2020</text><text x="853" y="1008">2021</text><text x="955" y="1008">2022</text><text x="1058" y="1008">2023</text><text x="1160" y="1008">2024</text><text x="1263" y="1008">2025</text><text x="1365" y="1008">2026</text><text x="1467" y="1008">2027</text><text x="1570" y="1008">2028</text><text x="1672" y="1008">2029</text><text x="1775" y="1008">2030</text>
</g>

<!-- bottom toolbar -->
<defs><linearGradient id="g" x1="0" y1="0" x2="0" y2="1"><stop offset="0" stop-color="#bcd9e4"/><stop offset="1" stop-color="#a3c3d0"/></linearGradient></defs>
<rect x="0" y="1011" width="1915" height="20" fill="#9ab7c4"/>
<rect x="1255" y="1012" width="459" height="17" fill="url(#g)"/>
<path d="M0 1010.500H1915" stroke="#6f8c9a" stroke-width="1.5"/>
<path d="M0 1030.500H1915" stroke="#6f8c9a"/>
<rect x="148.500" y="1013.500" width="11" height="14" rx="2" fill="#c8dde6" stroke="#7c98a6"/>
<rect x="1752.500" y="1013.500" width="11" height="14" rx="2" fill="#c8dde6" stroke="#7c98a6"/>
<path d="M155 1017l-3 3.500 3 3.500M1756 1017l3 3.500-3 3.500" stroke="#222" stroke-width="1.5" fill="none"/>
<g fill="none" stroke-width="1.5">
<path d="M8 1028V1015l3 5M6 1017l7 8M14 1028" stroke="#c03030" stroke-width="1"/><path d="M14 1028l7-13 3 1.500-7 13z" fill="#e8c030" stroke="#806010" stroke-width="1"/>
<path d="M33 1021l10-5M33 1021l10 5" stroke="#fff" stroke-width="1.500"/><circle cx="32" cy="1021" r="2.500" fill="#fff" stroke="none"/><circle cx="43" cy="1016" r="2.500" fill="#fff" stroke="none"/><circle cx="43" cy="1026" r="2.500" fill="#fff" stroke="none"/>
<rect x="53" y="1013" width="10" height="13" fill="#f0f4f8" stroke="#90a8b4" stroke-width="1"/><rect x="57" y="1018" width="11" height="9" rx="2" fill="#3a80d8" stroke="none"/>
<rect x="76" y="1014" width="10" height="14" fill="#f0f0f0" stroke="#444" stroke-width="1"/><path d="M78 1018h6M78 1021h6" stroke="#c03030"/><path d="M78 1024h6" stroke="#20a040"/>
<path d="M100 1012v17" stroke="#208030" stroke-width="2"/><path d="M94 1016h12M94 1024h12" stroke="#20b030" stroke-width="3"/><path d="M96 1020h12" stroke="#e03030" stroke-width="3"/>
<rect x="114" y="1013" width="10" height="10" fill="#d0e4f4" stroke="#2060b0" stroke-width="1"/><rect x="118" y="1018" width="11" height="10" fill="#fff" stroke="#2060b0" stroke-width="1"/><path d="M119 1026l3-4 2 2 3-4" stroke="#c03030" stroke-width="1"/>
<path d="M140 1017l-3 3.500 3 3.500M143 1017l-3 3.500 3 3.500" stroke="#5f7a88" stroke-width="1"/>
<path d="M1773 1018h6q6 0 6 5 0 3-3 5M1776 1015l-4 3 4 3" stroke="#7aa0d8" stroke-width="2"/>
<path d="M1803 1018h-6q-6 0-6 5 0 3 3 5M1800 1015l4 3-4 3" stroke="#7aa0d8" stroke-width="2"/>
<path d="M1822 1014v14M1826 1014v14" stroke="#20a040" stroke-width="2"/><path d="M1814 1028l5-6 2 2-5 5z" fill="#fff" stroke="#a03030" stroke-width="1"/>
<circle cx="1842" cy="1019" r="5" fill="#eef" stroke="#222" stroke-width="1.5"/><path d="M1846 1023l4 5M1851 1014v7M1838 1028h6" stroke="#222"/>
<circle cx="1864" cy="1019" r="5" fill="#eef" stroke="#222" stroke-width="1.5"/><path d="M1868 1023l4 5" stroke="#222" stroke-width="2"/><path d="M1861 1019h6" stroke="#2040c0"/>
<circle cx="1886" cy="1019" r="5" fill="#eef" stroke="#222" stroke-width="1.5"/><path d="M1890 1023l4 5" stroke="#222" stroke-width="2"/><path d="M1883 1019h6M1886 1016v6" stroke="#2040c0"/>
<path d="M1903 1016h12" stroke="#555" stroke-width="2" stroke-dasharray="1 1"/><path d="M1909 1019v8" stroke="#2060b0" stroke-width="2"/>
</g>

<!-- left toolbar -->
<rect x="0" y="22" width="27" height="989" fill="#9ab7c4"/>
<path d="M27 22V1031" stroke="#7c98a6" stroke-width="1"/>
<rect x="3.500" y="35.500" width="21" height="21" rx="2" fill="#8aa2ae" stroke="#73909e"/>
<g fill="none" stroke-width="1.500">
<path d="M11 29l3-2 3 2" stroke="#6f8c9a"/>
<path d="M11 40v11l3-3 3 5 2-1-3-5h4z" fill="#b8c4cc" stroke="#555" stroke-width="1"/>
<circle cx="12.500" cy="67" r="4.500" stroke="#222"/><path d="M16 71l4 4" stroke="#222" stroke-width="2"/>
<circle cx="15" cy="90" r="4.500" stroke="#222"/><path d="M18.500 94l4 4" stroke="#222" stroke-width="2"/><rect x="6.500" y="90.500" width="9" height="7" stroke="#2050d0" stroke-width="1" stroke-dasharray="2 1"/>
<path d="M6 120h13l-2-3v-4q0-4-4.500-4t-4.500 4v4z" fill="#ecd820" stroke="#8a7a10" stroke-width="1"/><path d="M6 107h12" stroke="#222"/><path d="M17 107v9l2-2 2 4 2-1-2-4h3z" fill="#fff" stroke="#555" stroke-width=".6"/>
<path d="M7 142h13l-2-3v-4q0-4-4.500-4t-4.500 4v4z" fill="#ecd820" stroke="#8a7a10" stroke-width="1"/><path d="M11.500 143.500h4" stroke="#8a7a10" stroke-width="2"/>
<path d="M6 165l3-10 3 8h5" stroke="#0818c0"/><path d="M13 163h9" stroke="#e89060" stroke-dasharray="2 1"/><path d="M20 170v-5h4M20 167h3" stroke="#1050d8"/>
<path d="M9 181h10" stroke="#e89060" stroke-dasharray="2 1"/><path d="M9 183h10" stroke="#3050d0"/><path d="M20 187v-5h4M20 184h3" stroke="#1050d8"/>
<rect x="8" y="196" width="12" height="9" stroke="#6090e8" stroke-width="1"/><path d="M8 203v5M5.500 205.500h5M20 194v5M17.500 196.500h5" stroke="#1030d0" stroke-width="1"/>
<rect x="8" y="217" width="12" height="9" fill="#a89cac" stroke="#e01818"/><path d="M8 224v5M5.500 226.500h5M20 215v5M17.500 217.500h5" stroke="#1030d0" stroke-width="1"/>
<path d="M10 248l10-8" stroke="#111" stroke-width="2.500"/><path d="M21 238l-5 1 3 4z" fill="#111" stroke="#111"/><circle cx="9" cy="249" r="2" stroke="#111" stroke-width="1"/>
<rect x="7.500" y="259.500" width="13" height="13" rx="2" stroke="#6090e8" fill="#a8c4dc" stroke-width="1"/>
<text x="14" y="270" font-size="10" font-weight="bold" font-family="Liberation Sans" text-anchor="middle" fill="#111" stroke="none">T</text>
<rect x="7" y="281" width="14" height="13" rx="5" stroke="#5090e0" fill="#b8d8e4" stroke-width="1"/>
<text x="14" y="291" font-size="10" font-weight="bold" font-family="Liberation Sans" text-anchor="middle" fill="#1a7a30" stroke="none">T</text>
<path d="M8 314l12-8" stroke="#222" stroke-width="1"/><circle cx="8" cy="314" r="2" stroke="#222" stroke-width="1"/><circle cx="20" cy="306" r="2" stroke="#222" stroke-width="1"/>
<path d="M14 332h10" stroke="#30a030"/><circle cx="12" cy="332" r="2" stroke="#30a030" stroke-width="1"/>
<path d="M14 354h10" stroke="#d02020"/><circle cx="12" cy="354" r="2" stroke="#d02020" stroke-width="1"/>
<path d="M6 379l15-8 2 4-15 8z" stroke="#556" fill="#c0ccd4" stroke-width="1"/>
<path d="M6 392h16" stroke="#30a030" stroke-dasharray="2 1"/><path d="M6 396h16M6 404h16" stroke="#e090b0" stroke-dasharray="2 1"/><path d="M6 400h16" stroke="#8080d0" stroke-dasharray="2 1"/>
<ellipse cx="14" cy="420" rx="7" ry="5" fill="#c09aa0" stroke="#e01818"/><path d="M7 424v5M4.500 426.500h5M21 416v-5M18.500 413.500h5" stroke="#1030d0" stroke-width="1"/>
<ellipse cx="14" cy="443" rx="7" ry="5" fill="#a89080" stroke="#905030"/><path d="M7 447v5M4.500 449.500h5M21 439v-5M18.500 436.500h5" stroke="#1030d0" stroke-width="1"/>
<ellipse cx="14" cy="464" rx="7" ry="5" fill="#80a888" stroke="#208030"/><path d="M7 468v5M4.500 470.500h5M21 460v-5M18.500 457.500h5" stroke="#1030d0" stroke-width="1"/>
<ellipse cx="14" cy="486" rx="7" ry="5" fill="#90c8a0" stroke="#20e020"/><path d="M7 490v5M4.500 492.500h5M21 482v-5M18.500 479.500h5" stroke="#1030d0" stroke-width="1"/>
<path d="M5 518l17-13" stroke="#111" stroke-width="1"/>
<path d="M5 538l17-15" stroke="#30a030"/>
<path d="M5 560l17-15" stroke="#e01818"/>
<path d="M5 574.500h18" stroke="#111" stroke-width="1"/><path d="M5 596.500h18" stroke="#f09080" stroke-width="2"/><path d="M5 618.500h18" stroke="#20e020" stroke-width="2"/><path d="M5 639.500h18" stroke="#108010" stroke-width="2"/><path d="M5 661.500h18" stroke="#e01818" stroke-width="2"/><path d="M5 684.500h18" stroke="#6090f0" stroke-width="2"/><path d="M5 706.500h18" stroke="#101090" stroke-width="2"/>
<path d="M14.500 719v16" stroke="#111"/>
<path d="M5 755h15L18 744z" stroke="#d06050" stroke-width="1"/><path d="M16 748h5" stroke="#2040d0" stroke-width="1"/>
<circle cx="14" cy="772" r="7" stroke="#d08050"/><path d="M11 772h6M14 769v6" stroke="#1030c0" stroke-width="1"/>
<path d="M6 803l8-12M14 791l7 3M6 792h1M13 799h1M20 800h1" stroke="#3050d8" stroke-width="1.5" stroke-dasharray="2 2"/>
<path d="M6 828l7-14M13 814l8 8" stroke="#3050d8" stroke-width="1.5" stroke-dasharray="2 2"/>
<path d="M7 845l4 6 10-11-7 13-4 2z" fill="#58b030" stroke="#3a7a20" stroke-width="1"/>
<path d="M6 865h4v12H6zM10 866l5-7q2 0 2 3l-1 3h5q2 2 0 4l-2 8h-9z" fill="#50a830" stroke="#2e7a20" stroke-width="1"/>
<path d="M7 893l4-2 3 4 3-4 4 2-4 5 4 6-4 2-3-4-3 4-4-2 4-6z" fill="#f01818" stroke="#e01010" stroke-width="1"/>
<path d="M14 915l8 14H6z" fill="#ecc030" stroke="#b07020" stroke-width="1"/><path d="M14 919v5M14 926v2" stroke="#a03010" stroke-width="1.500"/>
<path d="M14 936l6 6h-3v7h-6v-7H8z" fill="#20a040" stroke="#106020" stroke-width="1"/>
</g>
<rect x="0" y="944" width="27" height="14" fill="#b4cdd8"/><path d="M0 944H27M0 958H27" stroke="#7c98a6"/>
<path d="M11 949l3 3 3-3" stroke="#222" fill="none" stroke-width="1.500"/>
<rect x="9" y="963" width="10" height="13" fill="#f4f4f4" stroke="#444"/><circle cx="8" cy="964" r="3.500" fill="#20a040"/><path d="M14 980l7-7 2 2-7 7z" fill="#fff" stroke="#222"/>
<path d="M9 997h10" stroke="#222" stroke-width="2" stroke-dasharray="2 2"/><path d="M12 1002l2 2 2-2" stroke="#222" fill="none"/>
</svg>

<!-- top toolbar -->
<div class="tb"></div>
<svg width="60" height="22" viewBox="0 0 60 22" style="z-index:2">
<path d="M8 8v9M12 4v11M16 2v9" stroke="#208030" stroke-width="1"/>
<path d="M6 11h4v4H6zM10 7h4v5h-4zM14 4h4v5h-4z" fill="#30b040" stroke="#208030" stroke-width=".5"/>
<path d="M22 1V20" stroke="#7f9ba9"/>
<path d="M29 5h4v3h-4zM29 10h4v3h-4zM29 15h4v3h-4z" fill="#7d8f9a"/>
</svg>
<div class="t" style="left:43px;z-index:2">DAX</div>
<svg width="60" height="22" viewBox="0 0 60 22" style="left:60px;z-index:2"><path d="M6 10l3 3 3-3" stroke="#222" stroke-width="1.200" fill="none"/><path d="M19.500 1V20" stroke="#7f9ba9"/></svg>
<div class="b" style="left:83px;width:19px">12s</div>
<div class="b" style="left:107px;width:25px">144s</div>
<div class="b" style="left:136px;width:17px">1m</div>
<div class="b" style="left:158px;width:23px">12m</div>
<div class="b" style="left:185px;width:22px">56m</div>
<div class="b" style="left:211px;width:16px">1h</div>
<div class="b" style="left:232px;width:15px">4h</div>
<div class="b" style="left:251px;width:14px">D</div>
<div class="b" style="left:268px;width:15px">W</div>
<div class="b a" style="left:285px;width:13px">M</div>
<div class="b" style="left:301px;width:14px">Q</div>
<div class="t" style="left:323px">1 mes</div>
<svg width="30" height="22" viewBox="0 0 30 22" style="left:350px;z-index:2"><path d="M4 10l3 3 3-3" stroke="#222" stroke-width="1.200" fill="none"/><path d="M14.500 1V20" stroke="#7f9ba9"/></svg>
<div class="b" style="left:368px;width:22px">5kU</div>
<div class="b a" style="left:394px;width:27px">10kU</div>
<div class="b" style="left:425px;width:27px">35kU</div>
<div class="t" style="left:462px">10 k unidades</div>
<svg width="40" height="22" viewBox="0 0 40 22" style="left:526px;z-index:2"><path d="M4 10l3 3 3-3" stroke="#222" stroke-width="1.200" fill="none"/><path d="M15.500 1V20" stroke="#7f9ba9"/><path d="M20 8l5-4 4 8 5-5" stroke="#208030" fill="none"/><path d="M21 19v-4h3v4zM26 19v-5h3v5zM31 19v-3h3v3z" fill="#30a040"/><path d="M20 6l8 7 6-2" stroke="#c03030" fill="none" stroke-width=".8"/></svg>
<div class="t" style="left:567px">Indicadores</div>
<svg width="60" height="22" viewBox="0 0 60 22" style="left:622px;z-index:2"><path d="M.5 1V20M16.500 1V20" stroke="#7f9ba9"/><path d="M6 10l3 3 3-3" stroke="#222" stroke-width="1.200" fill="none"/><rect x="25.500" y="5.500" width="9" height="12" fill="#eef2f4" stroke="#8a9aa4"/><text x="30" y="15" font-size="10" font-family="Liberation Sans" text-anchor="middle" fill="#333">i</text><circle cx="47" cy="11.500" r="3.500" fill="#7d8a92"/></svg>
<div class="b" style="left:678px;width:38px;background:#ee5252;color:#fff;border-color:#d04040">-0,89 %</div>
<div class="t" style="left:720px">14 nov 2025</div>
<div class="b" style="left:778px;width:99px;background:#c0dca8;border-color:#9ab888">Alemania 40 Cash (1€)</div>
<svg width="65" height="22" viewBox="0 0 65 22" style="left:1850px;z-index:2"><path d="M.5 1V20M20.500 1V20" stroke="#7f9ba9"/><path d="M7 3q-3 0-3 3v6" stroke="#e04040" fill="none" stroke-width="1.500"/><path d="M1 11h6l-3 5z" fill="#e04040"/><path d="M9 18q3 0 3-3V9" stroke="#20b040" fill="none" stroke-width="1.500"/><path d="M9 10h6l-3-5z" fill="#20b040"/><path d="M26 15h6" stroke="#6a8290" stroke-width="2"/><rect x="40.500" y="7.500" width="6" height="7" fill="none" stroke="#6a8290"/><path d="M54 6l6 9M60 6l-6 9" stroke="#6a8290" stroke-width="1.200"/></svg>

<!-- second row -->
<svg width="60" height="18" viewBox="0 0 60 18" style="left:27px;top:21px;z-index:2">
<rect x="1.500" y="3.500" width="11" height="13" fill="#f8f8f8" stroke="#8fa8b5"/><rect x="16.500" y="3.500" width="11" height="13" fill="#f8f8f8" stroke="#8fa8b5"/>
<path d="M7 6v5M4 10l3 4 3-4z" fill="#e02020" stroke="#e02020"/><path d="M22 14V9M19 10l3-4 3 4z" fill="#20b030" stroke="#20b030"/>
</svg>
<div class="tab" style="left:59px;width:47px"><span class="sq"></span>Precio</div>
<div class="tab" style="left:106px;width:16px;padding-left:3px"><svg width="9" height="9" style="position:static" viewBox="0 0 9 9"><path d="M0 1h2M3 1h6M0 4h2M3 4h6M0 7h2M3 7h6" stroke="#445"/></svg></div>
<div class="tab" style="left:122px;width:65px"><span class="sq"></span>Cierre (W)</div>
<div class="tab" style="left:187px;width:137px"><span class="sq" style="background:#7d8f9a"></span>Tunel Domenec v4 (t t t t t)</div>
<div class="tab" style="left:324px;width:115px"><span class="sq" style="border:0;background:linear-gradient(90deg,#c03030 0 2px,#e8eef2 2px 3px,#3030a0 3px 4px,#e8eef2 4px 5px,#c03030 5px 7px)"></span>Control Total Doc v.6</div>
<div class="tab" style="left:439px;width:142px"><span class="sq" style="background:#000;border-color:#000"></span>Multi Avisos (3 f 3 1,5 70 f f)</div>
<div class="tab" style="left:581px;width:192px"><span class="sq"></span>DS_CotasHist (1 t t t 3 1 1 t f f f f f f f ...)</div>

<!-- panel tabs -->
<div class="pt" style="top:683px;width:151px"><span class="sq2"></span>Sistema de trenes Doc v4 (f f)</div>
<div class="pt" style="top:768px;width:74px"><span class="sq2" style="background:#7d8f9a"></span>Willy Doc (t)</div>
<div class="pt" style="top:862px;width:127px"><span class="sq2" style="background:#7d8f9a"></span>Awesome Evolution Doc</div>
<div class="pt" style="top:938px;width:177px"><span class="sq2"></span>Barra Fuerza Fondo Mercado v4 (f)</div>
</body></html>
